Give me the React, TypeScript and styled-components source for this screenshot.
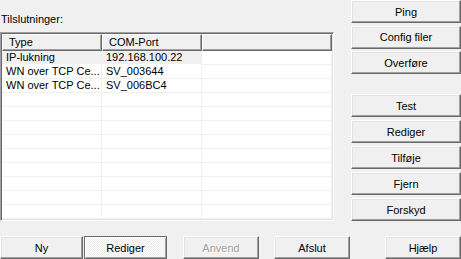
import styled, { createGlobalStyle, css } from "styled-components";

const GlobalStyle = createGlobalStyle`
  html, body {
    margin: 0;
    padding: 0;
    background: #f0f0f0;
  }
  body {
    font-family: "Liberation Sans", Arial, sans-serif;
    font-size: 11px;
    color: #000;
  }
`;

const Dialog = styled.div`
  width: 461px;
  height: 259px;
  background: #f0f0f0;
  display: flex;
  flex-direction: column;
  overflow: hidden;
`;

const Top = styled.div`
  display: flex;
  height: 221px;
`;

const LeftPane = styled.div`
  width: 334px;
  display: flex;
  flex-direction: column;
`;

const Label = styled.div`
  height: 32px;
  padding-left: 1px;
  line-height: 38px;
`;

const ListView = styled.div`
  flex: 1;
  background: #fff;
  border-style: solid;
  border-width: 1px;
  border-color: #a0a0a0 #fff #fff #a0a0a0;
  box-shadow: inset 1px 1px 0 #696969, inset -1px -1px 0 #e3e3e3;
  padding: 1px 1px 0 1px;
  overflow: hidden;
`;

const Grid = `grid-template-columns: 100px 100px 1fr;`;

const HeaderRow = styled.div`
  display: grid;
  ${Grid}
  height: 17px;
`;

const HeaderCell = styled.div`
  background: #f0f0f0;
  border-top: 1px solid #fff;
  border-left: 1px solid #fff;
  border-right: 1px solid #696969;
  border-bottom: 1px solid #696969;
  box-shadow: inset -1px -1px 0 #a0a0a0;
  padding-left: 6px;
  line-height: 15px;
  white-space: nowrap;
`;

const Row = styled.div`
  display: grid;
  ${Grid}
  height: 14px;
  &:first-of-type {
    height: 15px;
  }
`;

const Cell = styled.div<{ $selected?: boolean }>`
  border-bottom: 1px solid #f0f0f0;
  border-right: 1px solid #f0f0f0;
  padding-left: 4px;
  line-height: 13px;
  white-space: nowrap;
  overflow: hidden;
  ${(p) =>
    p.$selected &&
    css`
      background: #f0f0f0;
      border-bottom-color: #fff;
    `}
`;

const RightPane = styled.div`
  width: 110px;
  margin-left: 17px;
  display: flex;
  flex-direction: column;
`;

const ButtonGroup = styled.div<{ $top: number; $gap: number }>`
  display: flex;
  flex-direction: column;
  margin-top: ${(p) => p.$top}px;
  gap: ${(p) => p.$gap}px;
`;

const Button = styled.button<{
  $width?: number;
  $offset?: number;
  $default?: boolean;
}>`
  box-sizing: border-box;
  width: ${(p) => (p.$width ? `${p.$width}px` : "100%")};
  margin-left: ${(p) => p.$offset ?? 0}px;
  height: 23px;
  padding: 0;
  font-family: "Liberation Sans", Arial, sans-serif;
  font-size: 11px;
  color: #000;
  background: #f0f0f0;
  border-style: solid;
  border-width: 1px;
  border-color: #fff #696969 #696969 #fff;
  box-shadow: inset -1px -1px 0 #a0a0a0, inset 1px 1px 0 #e3e3e3;
  flex-shrink: 0;
  &:disabled {
    color: #a0a0a0;
    text-shadow: 1px 1px 0 #fff;
  }
  ${(p) =>
    p.$default &&
    css`
      border-color: #696969;
      box-shadow: inset 1px 1px 0 #fff, inset -1px -1px 0 #a0a0a0;
      background-color: #f0f0f0;
      background-image: repeating-conic-gradient(#ffffff 0 25%, #ececec 0 50%);
      background-size: 2px 2px;
    `}
`;

const BottomBar = styled.div`
  display: flex;
  margin-top: 15px;
`;

const rows: [string, string][] = [
  ["IP-lukning", "192.168.100.22"],
  ["WN over TCP Ce...", "SV_003644"],
  ["WN over TCP Ce...", "SV_006BC4"],
  ["", ""],
  ["", ""],
  ["", ""],
  ["", ""],
  ["", ""],
  ["", ""],
  ["", ""],
  ["", ""],
  ["", ""],
];

export default function App() {
  return (
    <>
      <GlobalStyle />
      <Dialog>
        <Top>
          <LeftPane>
            <Label>Tilslutninger:</Label>
            <ListView>
              <HeaderRow>
                <HeaderCell>Type</HeaderCell>
                <HeaderCell>COM-Port</HeaderCell>
                <HeaderCell />
              </HeaderRow>
              {rows.map(([type, port], i) => (
                <Row key={i}>
                  <Cell $selected={i === 0}>{type}</Cell>
                  <Cell $selected={i === 0}>{port}</Cell>
                  <Cell />
                </Row>
              ))}
            </ListView>
          </LeftPane>
          <RightPane>
            <ButtonGroup $top={0} $gap={2.5}>
              <Button>Ping</Button>
              <Button>Config filer</Button>
              <Button>Overføre</Button>
            </ButtonGroup>
            <ButtonGroup $top={20} $gap={3}>
              <Button>Test</Button>
              <Button>Rediger</Button>
              <Button>Tilføje</Button>
              <Button>Fjern</Button>
              <Button>Forskyd</Button>
            </ButtonGroup>
          </RightPane>
        </Top>
        <BottomBar>
          <Button $width={83}>Ny</Button>
          <Button $width={83} $offset={1} $default>
            Rediger
          </Button>
          <Button $width={76} $offset={16} disabled>
            Anvend
          </Button>
          <Button $width={76} $offset={15}>
            Afslut
          </Button>
          <Button $width={76} $offset={35}>
            Hjælp
          </Button>
        </BottomBar>
      </Dialog>
    </>
  );
}
